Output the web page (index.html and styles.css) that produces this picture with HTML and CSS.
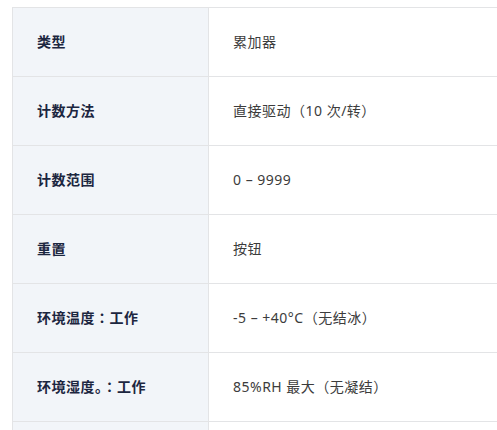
FILE: index.html
```html
<!DOCTYPE html>
<html lang="zh-CN">
<head>
<meta charset="utf-8">
<title>规格</title>
<link rel="stylesheet" href="styles.css">
</head>
<body>
<div class="wrap">
  <table class="spec">
    <tbody>
      <tr><th>类型</th><td>累加器</td></tr>
      <tr><th>计数方法</th><td>直接驱动（10 次/转）</td></tr>
      <tr><th>计数范围</th><td>0 – 9999</td></tr>
      <tr><th>重置</th><td>按钮</td></tr>
      <tr><th>环境温度：工作</th><td>-5 – +40°C（无结冰）</td></tr>
      <tr><th>环境湿度。：工作</th><td>85%RH 最大（无凝结）</td></tr>
      <tr><th>重量</th><td>约 50 g</td></tr>
    </tbody>
  </table>
</div>
</body>
</html>
```

FILE: styles.css
```css
html, body {
  margin: 0;
  padding: 0;
  overflow: hidden;
  background: #ffffff;
}
.wrap {
  padding: 7px 0 0 12px;
}
.spec {
  border-collapse: collapse;
  width: 640px;
  font-family: "Noto Sans", "Noto Sans CJK JP", sans-serif;
  font-feature-settings: "locl" 0;
  font-size: 14px;
  line-height: 20px;
  letter-spacing: 0.5px;
}
.spec th,
.spec td {
  border: 1px solid #e3e4e6;
  padding: 24px;
  height: 20px;
  text-align: left;
  vertical-align: middle;
  white-space: nowrap;
}
.spec th {
  width: 147px;
  background: #f2f5f9;
  color: #1c2640;
  font-weight: 700;
}
.spec td {
  color: #3c3c3c;
  font-weight: 400;
}
```
